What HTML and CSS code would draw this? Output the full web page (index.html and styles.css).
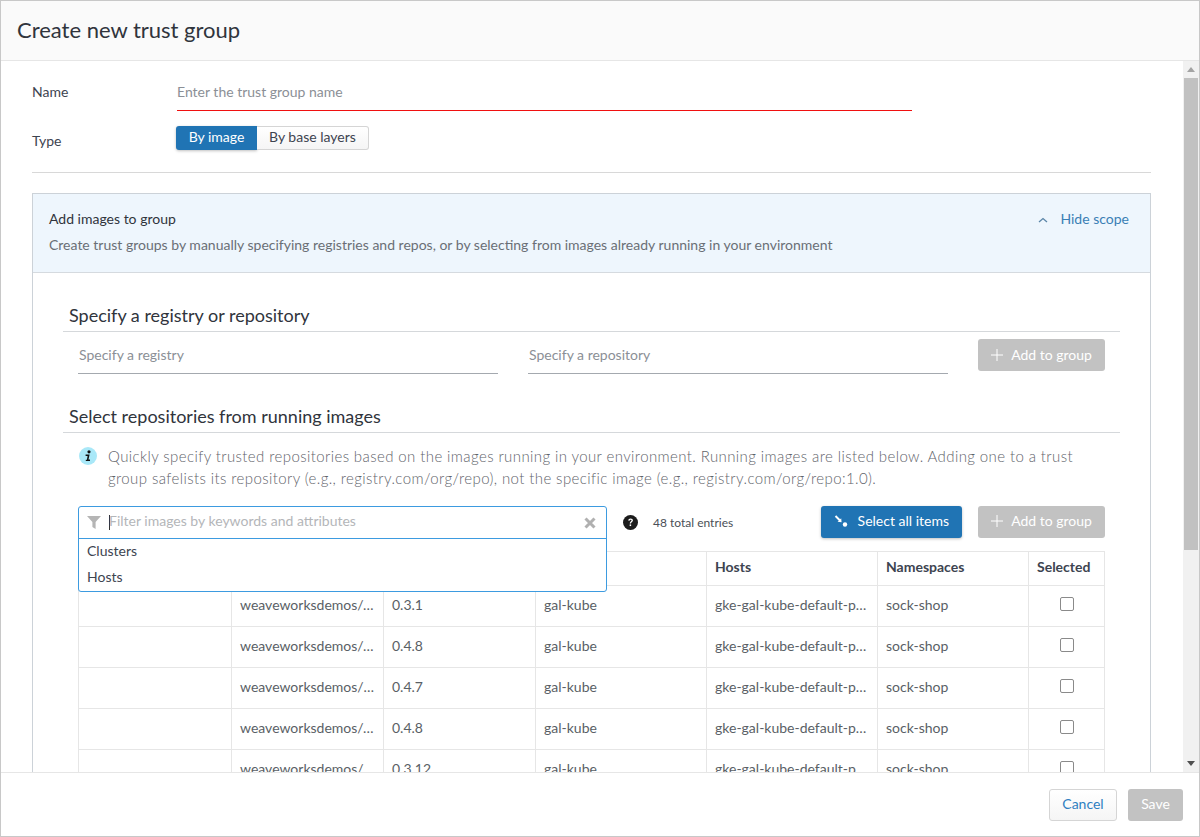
FILE: index.html
```html
<!DOCTYPE html>
<html lang="en">
<head>
<meta charset="UTF-8">
<meta name="viewport" content="width=device-width, initial-scale=1.0">
<title>Create new trust group</title>
<link rel="stylesheet" href="styles.css">
</head>
<body>

<div class="modal">
    <div class="modal-header">Create new trust group</div>

    <div class="modal-main">
        <div class="modal-body">
            <div class="form-row name-row">
                <label class="form-label">Name</label>
                <input class="name-input" placeholder="Enter the trust group name">
            </div>
            <div class="form-row type-row">
                <label class="form-label type-label">Type</label>
                <div class="toggle">
                    <span class="toggle-item active">By image</span>
                    <span class="toggle-item">By base layers</span>
                </div>
            </div>
            <div class="divider"></div>

            <div class="panel">
                <div class="panel-head">
                    <div class="panel-title-row">
                        <span class="panel-title">Add images to group</span>
                        <a class="scope-link">
                            <svg class="chevron" width="10" height="6" viewBox="0 0 10 6"><path d="M1 5 L5 1.5 L9 5" fill="none" stroke="#5b86a8" stroke-width="1.3"/></svg>
                            Hide scope
                        </a>
                    </div>
                    <div class="panel-desc">Create trust groups by manually specifying registries and repos, or by selecting from images already running in your environment</div>
                </div>

                <div class="panel-body">
                    <h3 class="section-title">Specify a registry or repository</h3>
                    <div class="spec-row">
                        <input class="spec-input" placeholder="Specify a registry">
                        <input class="spec-input" placeholder="Specify a repository">
                        <button class="btn btn-disabled add-btn">
                            <svg width="12" height="12" viewBox="0 0 12 12"><path d="M6 0 V12 M0 6 H12" stroke="#fff" stroke-width="1"/></svg>
                            Add to group
                        </button>
                    </div>

                    <h3 class="section-title second">Select repositories from running images</h3>
                    <div class="info">
                        <svg class="info-icon" width="18" height="18" viewBox="0 0 18 18">
                            <circle cx="9" cy="9" r="9" fill="#a9e8f8"/>
                            <circle cx="10" cy="4.8" r="1.6" fill="#111"/>
                            <path d="M6.6 7.6 H10.6 L9.5 12.6 H11 V14 H6.8 V12.8 H7.9 L8.6 9 H6.6 Z" fill="#111"/>
                        </svg>
                        <p>Quickly specify trusted repositories based on the images running in your environment. Running images are listed below. Adding one to a trust group safelists its repository (e.g., registry.com/org/repo), not the specific image (e.g., registry.com/org/repo:1.0).</p>
                    </div>

                    <div class="toolbar">
                        <div class="filter-spacer"></div>
                        <svg class="help-icon" width="15" height="15" viewBox="0 0 14 14">
                            <circle cx="7" cy="7" r="7" fill="#1c1c1c"/>
                            <path d="M4.8 5.2 Q5 3.2 7.1 3.2 Q9.3 3.3 9.3 5 Q9.3 6 8.2 6.7 Q7.5 7.1 7.5 8 H6.3 Q6.2 6.7 7.2 6 Q8 5.5 8 5 Q7.9 4.4 7.1 4.4 Q6.2 4.4 6.1 5.4 Z" fill="#fff"/>
                            <rect x="6.2" y="8.8" width="1.4" height="1.5" fill="#fff"/>
                        </svg>
                        <span class="total">48 total entries</span>
                        <button class="btn btn-primary select-btn">
                            <svg width="14" height="12" viewBox="0 0 14 12">
                                <path d="M1.5 1 L6 5.5" stroke="#fff" stroke-width="2"/>
                                <path d="M3.6 6.8 L7.6 7.2 L7.2 3.2 Z" fill="#fff"/>
                                <circle cx="11" cy="9.5" r="2.2" fill="#fff"/>
                            </svg>
                            Select all items
                        </button>
                        <button class="btn btn-disabled add-btn">
                            <svg width="12" height="12" viewBox="0 0 12 12"><path d="M6 0 V12 M0 6 H12" stroke="#fff" stroke-width="1"/></svg>
                            Add to group
                        </button>
                    </div>

                    <div class="table-wrap">
                        <div class="filter-box">
                            <div class="filter-input-row">
                                <svg class="funnel" width="14" height="13" viewBox="0 0 14 13"><path d="M0 0 H14 L8.6 6 V13 L5.4 11 V6 Z" fill="#b5b5b5"/></svg>
                                <span class="caret"></span>
                                <input class="filter-input" placeholder="Filter images by keywords and attributes">
                                <svg class="clear" width="12" height="12" viewBox="0 0 12 12"><path d="M1.5 1.5 L10.5 10.5 M10.5 1.5 L1.5 10.5" stroke="#b0b0b0" stroke-width="3"/></svg>
                            </div>
                            <div class="filter-option">Clusters</div>
                            <div class="filter-option">Hosts</div>
                        </div>

                        <table class="images">
                            <thead>
                                <tr><th>Registry</th><th>Repository</th><th>Tag</th><th>Clusters</th><th>Hosts</th><th>Namespaces</th><th>Selected</th></tr>
                            </thead>
                            <tbody>
                                <tr><td></td><td>weaveworksdemos/carts</td><td>0.3.1</td><td>gal-kube</td><td>gke-gal-kube-default-pool-1a</td><td>sock-shop</td><td class="check"><span class="box"></span></td></tr>
                                <tr><td></td><td>weaveworksdemos/catalogue</td><td>0.4.8</td><td>gal-kube</td><td>gke-gal-kube-default-pool-1a</td><td>sock-shop</td><td class="check"><span class="box"></span></td></tr>
                                <tr><td></td><td>weaveworksdemos/front-end</td><td>0.4.7</td><td>gal-kube</td><td>gke-gal-kube-default-pool-1a</td><td>sock-shop</td><td class="check"><span class="box"></span></td></tr>
                                <tr><td></td><td>weaveworksdemos/orders</td><td>0.4.8</td><td>gal-kube</td><td>gke-gal-kube-default-pool-1a</td><td>sock-shop</td><td class="check"><span class="box"></span></td></tr>
                                <tr><td></td><td>weaveworksdemos/payment</td><td>0.3.12</td><td>gal-kube</td><td>gke-gal-kube-default-pool-1a</td><td>sock-shop</td><td class="check"><span class="box"></span></td></tr>
                            </tbody>
                        </table>
                    </div>
                </div>
            </div>
        </div>

        <div class="scrollbar">
            <svg class="arrow" width="8" height="5" viewBox="0 0 8 5"><path d="M4 0 L8 5 H0 Z" fill="#a3a3a3"/></svg>
            <div class="track"><div class="thumb"></div></div>
            <svg class="arrow" width="8" height="5" viewBox="0 0 8 5"><path d="M0 0 H8 L4 5 Z" fill="#505050"/></svg>
        </div>
    </div>

    <div class="modal-footer">
        <button class="btn btn-cancel">Cancel</button>
        <button class="btn btn-disabled save-btn">Save</button>
    </div>
</div>

</body>
</html>
```

FILE: styles.css
```css
* {
    box-sizing: border-box;
}
html, body {
    height: 100%;
}
body {
    margin: 0;
    font-family: Lato, "Open Sans", sans-serif;
    font-size: 14px;
    color: #3d4450;
    background: #fff;
    overflow: hidden;
}
.modal {
    height: 837px;
    display: flex;
    flex-direction: column;
    border: 1px solid #c8c8c8;
}
.modal-header {
    height: 60px;
    flex: none;
    padding: 0 16px;
    line-height: 58px;
    font-size: 22px;
    color: #30343c;
    background: #fafafa;
    border-bottom: 1px solid #e6e6e6;
}
.modal-main {
    flex: 1;
    min-height: 0;
    display: flex;
}
.modal-body {
    flex: 1;
    min-width: 0;
    overflow: hidden;
    padding: 0 32px 0 31px;
}
.form-row {
    display: flex;
}
.name-row {
    align-items: center;
    padding-top: 12px;
}
.form-label {
    width: 145px;
    flex: none;
    padding-bottom: 2px;
    color: #3d4450;
}
.name-input {
    width: 735px;
    height: 38px;
    border: none;
    border-bottom: 1px solid #f01010;
    padding: 0;
    font: 14px Lato, sans-serif;
    outline: none;
}
input::placeholder {
    color: #8b8f96;
    opacity: 1;
}
.type-row {
    margin-top: 15px;
}
.form-label.type-label {
    width: 144px;
    padding: 6px 0 0 0;
}
.toggle {
    display: flex;
    height: 24px;
}
.toggle-item {
    padding: 0 12px;
    line-height: 20px;
    border: 1px solid #d5d5d5;
    border-left: none;
    border-radius: 0 3px 3px 0;
    background: linear-gradient(#fff, #f5f5f5);
    color: #3d4450;
}
.toggle-item.active {
    width: 81px;
    padding: 0;
    text-align: center;
    line-height: 22px;
    color: #fff;
    border: none;
    border-radius: 3px 0 0 3px;
    background: #2074b4;
    box-shadow: 0 1px 3px rgba(0,0,0,0.25);
}
.divider {
    margin-top: 22px;
    height: 1px;
    background: #d8d8d8;
}
.panel {
    margin-top: 20px;
    border: 1px solid #ccd2d8;
    border-bottom: none;
}
.panel-head {
    height: 79px;
    padding: 15px 21px 0 16px;
    background: #eef6fd;
    border-bottom: 1px solid #d5dadf;
}
.panel-title-row {
    display: flex;
    justify-content: space-between;
    align-items: center;
    height: 19px;
}
.panel-title {
    color: #30343c;
}
.scope-link {
    color: #3a7fb5;
}
.chevron {
    margin-right: 9px;
    vertical-align: 1px;
}
.panel-desc {
    margin-top: 8px;
    color: #6a6f76;
}
.panel-body {
    padding: 32px 30px 0 30px;
}
.section-title {
    margin: 0;
    height: 27px;
    padding-left: 6px;
    font-size: 18px;
    font-weight: 400;
    line-height: 20px;
    color: #30343c;
    border-bottom: 1px solid #d5d8db;
}
.section-title.second {
    margin-top: 32px;
}
.spec-row {
    display: flex;
    align-items: flex-start;
    padding: 7px 15px 0 15px;
}
.spec-input {
    width: 420px;
    height: 34px;
    margin: 1px 30px 0 0;
    padding: 0 0 4px 1px;
    border: none;
    border-bottom: 1px solid #a4a9af;
    font: 14px Lato, sans-serif;
    outline: none;
}
.btn {
    height: 32px;
    border: none;
    border-radius: 3px;
    font: 14px Lato, sans-serif;
    padding: 0 0 3px 0;
}
.btn-disabled {
    background: #c2c2c2;
    color: #fff;
}
.add-btn {
    width: 127px;
}
.spec-row .add-btn {
    padding-bottom: 1px;
}
.add-btn svg {
    margin-right: 5px;
    vertical-align: -1px;
}
.btn-primary {
    background: #2074b4;
    color: #fff;
    box-shadow: 0 1px 3px rgba(0,0,0,0.25);
}
.info {
    display: flex;
    padding: 12px 15px 0 16px;
}
.info-icon {
    flex: none;
    margin: 2px 11px 0 0;
}
.info p {
    margin: 0;
    font-size: 15px;
    font-weight: 300;
    line-height: 22px;
    letter-spacing: 0.4px;
    color: #5f646b;
}
.toolbar {
    display: flex;
    align-items: center;
    height: 32px;
    margin-top: 17px;
    padding: 0 15px;
}
.filter-spacer {
    width: 545px;
    flex: none;
}
.help-icon {
    flex: none;
}
.total {
    margin-left: 15px;
    font-size: 12px;
    color: #4a4f56;
    flex: 1;
}
.select-btn {
    width: 141px;
    margin-right: 16px;
}
.select-btn svg {
    margin-right: 6px;
    vertical-align: -1px;
}
.table-wrap {
    position: relative;
    margin-top: 13px;
    padding: 0 15px;
}
.filter-box {
    position: absolute;
    left: 15px;
    top: -45px;
    width: 529px;
    height: 86px;
    background: #fff;
    border: 1px solid #3d9be0;
    border-radius: 3px;
    z-index: 2;
}
.filter-input-row {
    display: flex;
    align-items: center;
    height: 32px;
    padding: 0 10px 0 8px;
    border-bottom: 1px solid #3d9be0;
}
.funnel {
    flex: none;
    margin-right: 8px;
}
.caret {
    width: 1px;
    height: 15px;
    flex: none;
    margin-right: -1px;
    background: #333;
}
.filter-input {
    flex: 1;
    border: none;
    padding: 0 0 5px 0;
    background: transparent;
    font: 14px Lato, sans-serif;
    outline: none;
}
.filter-input::placeholder {
    color: #b4b6b9;
}
.filter-option {
    height: 26px;
    padding: 0 8px;
    line-height: 23px;
    color: #3d4450;
}
.images {
    width: 1027px;
    table-layout: fixed;
    border-collapse: collapse;
}
.images th, .images td {
    border: 1px solid #e6e6e6;
    padding: 0 8px 4px 8px;
    text-align: left;
    white-space: nowrap;
    overflow: hidden;
    text-overflow: ellipsis;
}
.images th {
    height: 34px;
    font-weight: 700;
    color: #3d4450;
}
.images td {
    height: 41px;
    color: #5a5f66;
}
.images th:nth-child(1) {
    width: 153px;
}
.images th:nth-child(2), .images th:nth-child(3) {
    width: 152px;
}
.images th:nth-child(4), .images th:nth-child(5) {
    width: 171px;
}
.images th:nth-child(6) {
    width: 151px;
}
.check {
    text-align: center !important;
}
.box {
    display: inline-block;
    width: 14px;
    height: 14px;
    margin-top: 3px;
    border: 1px solid #8a8a8a;
    border-radius: 2px;
    background: #fff;
}
.scrollbar {
    width: 16px;
    flex: none;
    display: flex;
    flex-direction: column;
    align-items: center;
    background: #f1f1f1;
}
.arrow {
    flex: none;
    margin: 6px 0;
}
.track {
    flex: 1;
    width: 100%;
}
.thumb {
    height: 472px;
    margin: 0 1px;
    background: #c1c1c1;
}
.modal-footer {
    height: 64px;
    flex: none;
    display: flex;
    justify-content: flex-end;
    align-items: flex-start;
    padding: 16px 16px 0 0;
    background: #fff;
    border-top: 1px solid #e6e6e6;
}
.btn-cancel {
    width: 68px;
    margin-right: 11px;
    color: #2f7fc1;
    border: 1px solid #d5d5d5;
    background: linear-gradient(#fff, #f5f5f5);
}
.save-btn {
    width: 55px;
}
```
